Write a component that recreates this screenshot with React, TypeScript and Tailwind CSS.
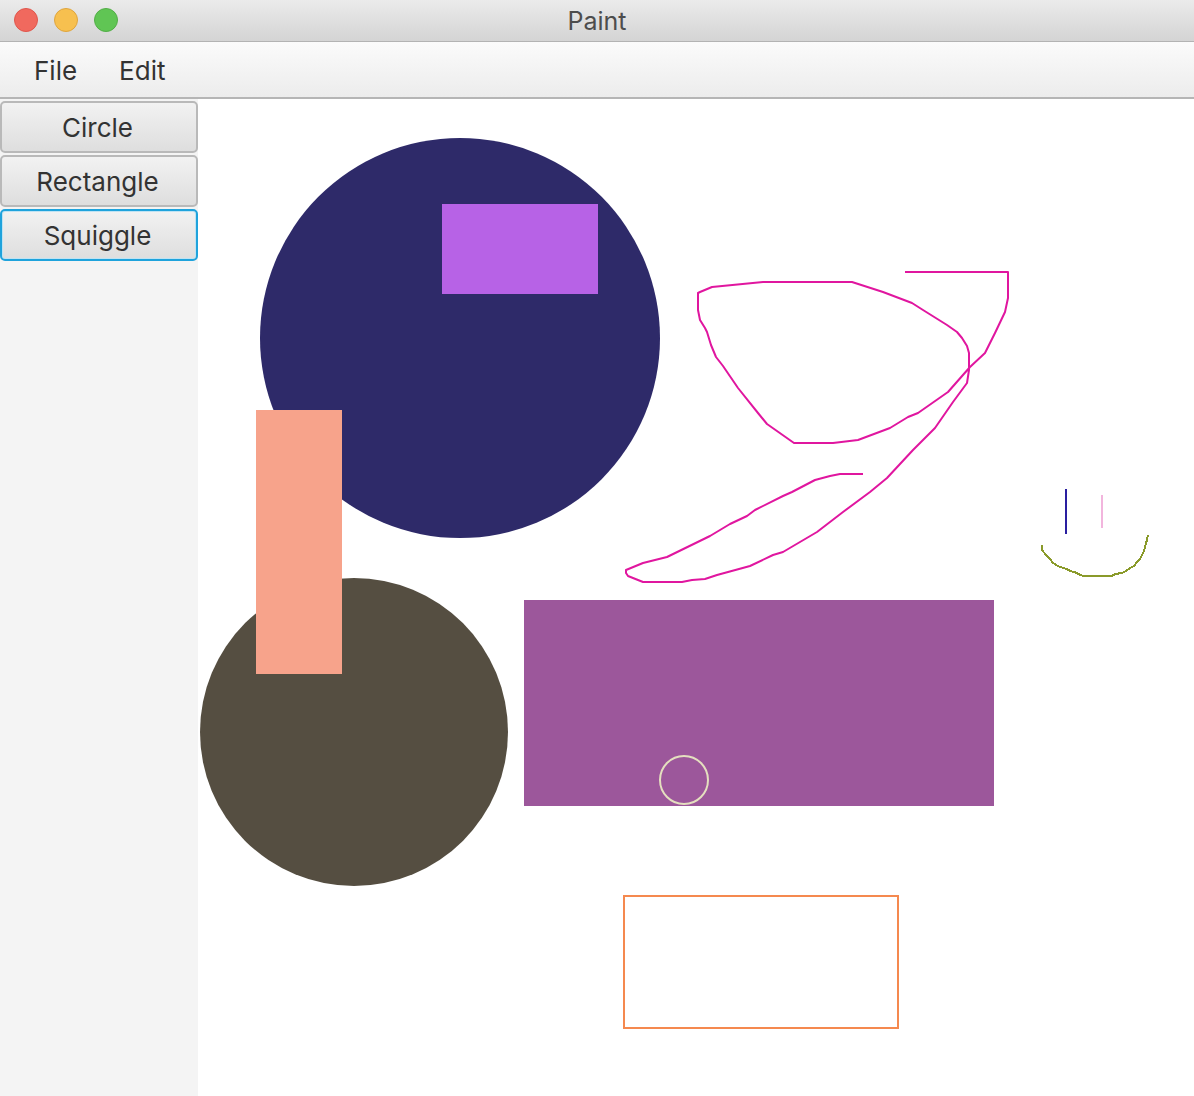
import React from "react";

const squiggle1 = [
  [905, 272], [1008, 272], [1008, 298], [1005, 312], [995, 333], [985, 353], [970, 367], [948, 392], [918, 413], [908, 417], [890, 428], [858, 440], [833, 443], [794, 443], [767, 424], [758, 413], [738, 388], [723, 366], [716, 357], [711, 345], [707, 332], [705, 328], [700, 320], [698, 310], [698, 293], [700, 292], [712, 287], [763, 282], [852, 282], [883, 292], [912, 303], [923, 310], [947, 325], [957, 332], [962, 338], [967, 346], [969, 353], [969, 370], [967, 383], [953, 402], [935, 428], [913, 450], [887, 478], [870, 492], [843, 512], [817, 532], [783, 552], [773, 555], [750, 566], [717, 575], [705, 579], [692, 580], [682, 582], [643, 582], [628, 576], [626, 573], [626, 570], [643, 563], [667, 557], [710, 536], [730, 524], [747, 516], [755, 510], [783, 496], [792, 492], [815, 480], [830, 476], [840, 474], [863, 474],
];

const olive = [
  [1042, 545], [1042, 550], [1046, 555], [1050, 559], [1053, 563], [1058, 566], [1063, 568], [1067, 569], [1070, 571], [1074, 572], [1077, 573], [1080, 575], [1084, 576], [1112, 576], [1115, 574], [1122, 573], [1126, 571], [1130, 568], [1134, 566], [1137, 562], [1140, 559], [1142, 555], [1144, 551], [1145, 547], [1146, 543], [1147, 540], [1148, 535],
];

const pts = (a: number[][]) => a.map((p) => p.join(",")).join(" ");

function ToolButton({ label, focused }: { label: string; focused?: boolean }) {
  return (
    <button
      className={
        "h-[52px] w-[198px] rounded-[5px] bg-gradient-to-b from-[#f2f2f2] to-[#dedede] pr-[3px] pt-[2px] text-[26px] leading-none text-[#333333] " +
        (focused
          ? "border-2 border-[#1fa3dc] shadow-[inset_0_0_0_1px_#bfe3f3]"
          : "border-2 border-[#b9b9b9]")
      }
    >
      {label}
    </button>
  );
}

export default function App() {
  return (
    <div className="flex h-[1096px] w-[1194px] flex-col overflow-hidden bg-white font-['Inter','Noto_Sans',sans-serif]">
      {/* Title bar */}
      <div className="relative flex h-[42px] shrink-0 items-center justify-center border-b border-[#b3b3b3] bg-gradient-to-b from-[#ebebeb] to-[#d4d4d4] pt-[2px]">
        <div className="absolute left-[14px] top-[8px] flex gap-[16px]">
          <div className="h-[24px] w-[24px] rounded-full border border-[#e0564c] bg-[#f0695e]" />
          <div className="h-[24px] w-[24px] rounded-full border border-[#dfa53e] bg-[#f7c04f]" />
          <div className="h-[24px] w-[24px] rounded-full border border-[#52ae47] bg-[#60c554]" />
        </div>
        <span className="text-[25px] leading-none text-[#4d4d4d]">Paint</span>
      </div>
      {/* Menu bar */}
      <div className="flex h-[57px] shrink-0 items-center gap-[42px] border-b-2 border-[#b5b5b5] bg-gradient-to-b from-[#fbfbfb] to-[#ececec] pl-[34px] pt-[3px]">
        <span className="text-[26px] leading-none text-[#333333]">File</span>
        <span className="text-[26px] leading-none text-[#333333]">Edit</span>
      </div>
      {/* Body */}
      <div className="flex min-h-0 flex-1">
        <div className="flex w-[198px] shrink-0 flex-col gap-[2px] bg-[#f4f4f4] pt-[2px]">
          <ToolButton label="Circle" />
          <ToolButton label="Rectangle" />
          <ToolButton label="Squiggle" focused />
        </div>
        <div className="min-w-0 flex-1 bg-white">
          <svg width="996" height="997" viewBox="198 99 996 997" className="block">
            <circle cx="460" cy="338" r="200" fill="#2e2a69" />
            <rect x="442" y="204" width="156" height="90" fill="#b762e6" />
            <circle cx="354" cy="732" r="154" fill="#554e41" />
            <rect x="256" y="410" width="86" height="264" fill="#f7a38b" />
            <rect x="524" y="600" width="470" height="206" fill="#9c579b" />
            <circle cx="684" cy="780" r="24" fill="none" stroke="#e4dfbf" strokeWidth="2" />
            <rect x="624" y="896" width="274" height="132" fill="none" stroke="#f5894f" strokeWidth="2" />
            <polyline points={pts(squiggle1)} fill="none" stroke="#e0169f" strokeWidth="2" strokeLinejoin="round" />
            <line x1="1066" y1="489" x2="1066" y2="534" stroke="#2a1fa0" strokeWidth="2" />
            <line x1="1102" y1="495" x2="1102" y2="528" stroke="#f2b5dd" strokeWidth="2" />
            <polyline points={pts(olive)} fill="none" stroke="#8a9a2a" strokeWidth="2" shapeRendering="crispEdges" />
          </svg>
        </div>
      </div>
    </div>
  );
}
